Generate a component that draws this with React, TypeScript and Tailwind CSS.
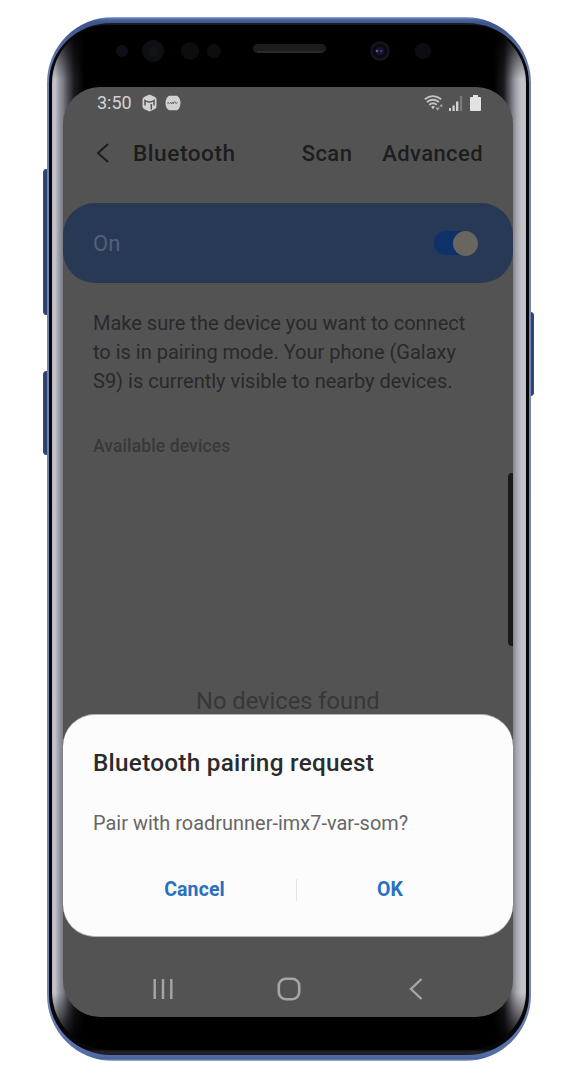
import React from "react";

const sensors = (
  <svg className="block h-[62px] w-full" viewBox="0 0 450 62" fill="none">
    <circle cx="59" cy="26" r="6" fill="#0d0f18" />
    <circle cx="90" cy="26" r="11" fill="#0d0f13" />
    <circle cx="90" cy="27" r="5" fill="#10151a" />
    <circle cx="127" cy="26" r="9" fill="#0c0d10" />
    <circle cx="151" cy="26" r="7" fill="#0c0d10" />
    <rect x="190" y="19" width="73" height="9" rx="4.5" fill="#1c1c1e" />
    <path d="M194 27h65" stroke="#39393b" strokeWidth="1.2" />
    <circle cx="317" cy="26" r="8.500" fill="#090910" stroke="#15151d" strokeWidth="2.500" />
    <circle cx="317" cy="26" r="4.500" fill="#14152c" />
    <circle cx="314" cy="26" r="1.300" fill="#6a5578" />
    <circle cx="318" cy="26" r="1.300" fill="#2c3a78" />
    <circle cx="360" cy="26" r="8" fill="#0c0d10" />
  </svg>
);

function StatusBar() {
  return (
    <div className="flex h-8 shrink-0 items-center pl-[34px] pr-8 text-[#d2d2d2]">
      <span className="text-[18px] leading-none">3:50</span>
      <svg className="ml-[10px] h-[18px] w-[15px]" viewBox="0 0 15 18">
        <path d="M7.5 .5 13 3Q14.500 4 14.500 6v6q0 2-1.500 3L7.500 17.500 2 15Q.5 14 .5 12V6Q.5 4 2 3Z" fill="currentColor" />
        <path d="M3 11.500V6.500Q7.500 9.500 12 6.500v5M9.300 10v5.500" fill="none" stroke="#555" strokeWidth="1.500" />
      </svg>
      <svg className="ml-[8px] h-4 w-4" viewBox="0 0 16 16">
        <path d="M4 .7h8Q15.500 3 15.500 8T12 15.300H4Q.5 13 .5 8T4 .7Z" fill="currentColor" />
        <path d="M3 9V7l1.500 1.500L6 7v1.500h1.500V7M8.500 9V7h2v1.500M11 9l1.500-2" fill="none" stroke="#777" strokeWidth="1" />
      </svg>
      <div className="ml-auto flex items-center gap-[5px]">
        <svg className="h-[17px] w-5" viewBox="0 0 20 17" fill="none" stroke="#c4c4c4" strokeWidth="1.900">
          <path d="M.8 4.200Q9 -2 17.200 4.200M3 7Q9 2.500 15 7M5.200 9.700Q9 6.800 12.800 9.700" />
          <path d="m7.200 11.800 1.800-1 1.800 1L9 14.200Z" fill="currentColor" stroke="none" />
          <path d="m11.500 12.500 2.200 3.200 2-3.200ZM15.500 11.500l1.800-2.500L19 11.500Z" fill="#aaa" stroke="none" />
        </svg>
        <svg className="h-4 w-[14px]" viewBox="0 0 14 16" fill="currentColor">
          <path d="M0 13h2v3H0ZM3.500 10.500h2.200V16H3.500ZM7 6.500h2.400V16H7Z" />
          <path d="M11 1h2.200v15H11Z" fill="#7c7c7c" />
        </svg>
        <svg className="ml-[2px] h-4 w-[11px]" viewBox="0 0 11 16" fill="#e2e2e2">
          <path d="M3 0h5v2h2q1 0 1 1v12q0 1-1 1H1q-1 0-1-1V3q0-1 1-1h2Z" />
        </svg>
      </div>
    </div>
  );
}

function AppBar() {
  return (
    <div className="flex h-[84px] shrink-0 items-start pl-8 pr-[30px] pt-[22px] font-medium text-[#1d1d1d]">
      <svg className="h-[24px] w-[15px]" viewBox="0 0 15 24" fill="none" stroke="currentColor" strokeWidth="2">
        <path d="M13 3 3 12l10 9" />
      </svg>
      <span className="ml-[23px] text-[22.6px] leading-[26px] tracking-[0.55px]">Bluetooth</span>
      <span className="ml-auto text-[22px] leading-[26px] tracking-[0.4px]">Scan</span>
      <span className="ml-[30px] text-[22px] leading-[26px] tracking-[0.4px]">Advanced</span>
    </div>
  );
}

function PairingDialog() {
  return (
    <div className="h-[223px] shrink-0 rounded-[32px] border-y border-[#b5b5b5] bg-[#fcfcfc] px-[30px] pt-[34px]">
      <h1 className="whitespace-nowrap text-[24.3px] font-medium leading-7 tracking-[0.27px] text-[#2b2b2b]">Bluetooth pairing request</h1>
      <p className="mt-[35px] whitespace-nowrap text-[19.9px] leading-6 tracking-[0.03px] text-[#666]">Pair with roadrunner-imx7-var-som?</p>
      <div className="mt-[42px] flex h-6 items-center text-[19.5px] font-bold leading-6 tracking-[0.1px] text-[#2a70bd]">
        <button className="w-[203px]">Cancel</button>
        <span className="h-[22px] w-px bg-[#e4e4e4]" />
        <button className="w-[186px]">OK</button>
      </div>
    </div>
  );
}

function NavBar() {
  return (
    <div className="flex h-20 shrink-0 items-center pb-[16px] pl-[90px] pt-[40px] text-[#a6a6a6]">
      <svg className="h-6 w-[22px]" viewBox="0 0 22 24" fill="none" stroke="currentColor" strokeWidth="2.400">
        <path d="M1.700 2v20M10 2v20M18.300 2v20" />
      </svg>
      <svg className="ml-[102px] h-6 w-6" viewBox="0 0 24 24" fill="none" stroke="currentColor" strokeWidth="2.600">
        <rect x="1.800" y="1.800" width="20.400" height="20.400" rx="7" />
      </svg>
      <svg className="ml-[108px] h-6 w-[14px]" viewBox="0 0 14 24" fill="none" stroke="currentColor" strokeWidth="2.400">
        <path d="M12.500 2 2 12l10.500 10" />
      </svg>
    </div>
  );
}

function Screen() {
  return (
    <div className="relative flex h-[930px] flex-col overflow-hidden rounded-[37px] bg-[#535353]">
      <StatusBar />
      <AppBar />
      <div className="flex h-20 shrink-0 items-center justify-between rounded-[32px] bg-[#283956] pl-[30px] pr-[35px]">
        <span className="pt-px text-[22px] text-[#53617a]">On</span>
        <div className="flex h-6 w-[44px] items-center justify-end rounded-full bg-[#0e316a]">
          <span className="h-[25px] w-[25px] rounded-full bg-[#68665f]" />
        </div>
      </div>
      <p className="whitespace-nowrap pl-[30px] pt-[26px] text-[20px] leading-[29px] text-[#292929]">
        Make sure the device you want to connect
        <br />
        to is in pairing mode. Your phone (Galaxy
        <br />
        S9) is currently visible to nearby devices.
      </p>
      <h2 className="pl-[30px] pt-[38px] text-[17.500px] font-medium leading-6 tracking-[0.12px] text-[#393939]">Available devices</h2>
      <p className="-mb-2 whitespace-nowrap pl-[133px] pt-[229px] text-[23.7px] leading-7 text-[#373737]">No devices found</p>
      <div className="relative mt-auto flex shrink-0 flex-col">
        <PairingDialog />
        <NavBar />
      </div>
      <span className="absolute right-0 top-[386px] h-[173px] w-[5px] rounded-l-[4px] bg-[#191919]" />
    </div>
  );
}

const sideKey = "absolute w-[6px] border border-[#3a4c7c] bg-[#2c4275]";

export default function App() {
  return (
    <div className="flex h-[1084px] w-[568px] items-start bg-white pl-[47px] pt-[17px] font-['Roboto',sans-serif]">
      <div className="relative w-[484px]">
        <span className={`${sideKey} -left-[4px] top-[152px] h-[146px] rounded-l-[3px]`} />
        <span className={`${sideKey} -left-[4px] top-[354px] h-[84px] rounded-l-[3px]`} />
        <span className={`${sideKey} -right-[3px] top-[295px] h-[84px] rounded-r-[3px]`} />
        <div className="relative h-[1044px] overflow-hidden rounded-[66px] bg-[linear-gradient(#9db0d5_0px,#4d68a3_2px,#3c548a_6px,#6f86b3_60px,#7187b5_980px,#526ca6_1038px,#48629b_1042px,#a9b9d8_1044px)] px-[2px] py-[6px]">
          <div className="h-full rounded-[62px/60px] bg-[linear-gradient(#222229_0px,#06070b_4px,#06070b_1026px,#24242a_1029px,#1b1b22_1032px)] px-[3px] pb-[5px] pt-[2px]">
            <div className="h-full rounded-[58px/58px] bg-[linear-gradient(#000_0px,transparent_54px,transparent_968px,#000_1018px),linear-gradient(to_right,#b9b9c1_0px,#c4c4cb_3px,#9a9aa3_7px,#7b7b84_11px,#4a4a52_16px,#1c1c20_22px,#000_32px,#000_442px,#1c1c20_452px,#55555d_457px,#85858e_461px,#a9a9b1_465px,#c4c4cb_470px,#c0c0c7_474px)] pl-[11px] pr-[13px]">
              {sensors}
              <Screen />
            </div>
          </div>
        </div>
      </div>
    </div>
  );
}
